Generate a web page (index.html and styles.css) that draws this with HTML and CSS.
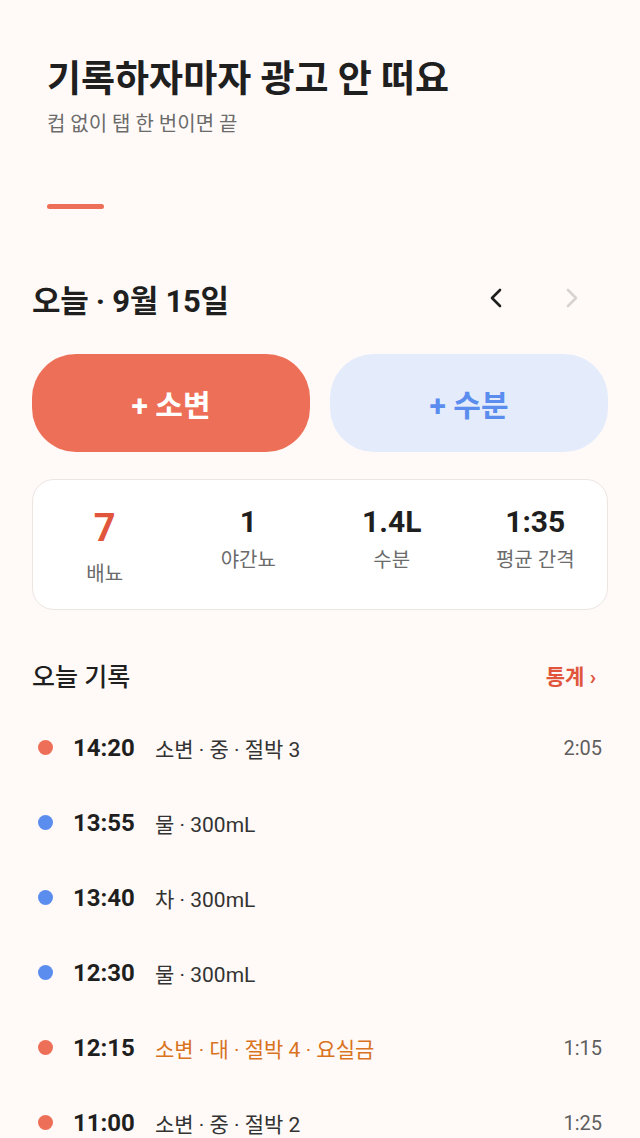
FILE: index.html
```html
<!DOCTYPE html>
<html lang="ko">
<head>
    <meta charset="UTF-8">
    <meta name="viewport" content="width=device-width, initial-scale=1.0">
    <title>오늘 기록</title>
    <link rel="stylesheet" href="styles.css">
</head>
<body>
    <div class="intro">
        <h1>기록하자마자 광고 안 떠요</h1>
        <p class="sub">컵 없이 탭 한 번이면 끝</p>
        <div class="accent"></div>
    </div>

    <div class="app">
        <div class="date-bar">
            <h2>오늘 · 9월 15일</h2>
            <div class="nav">
                <span class="chev">
                    <svg width="14" height="20" viewBox="0 0 14 20"><path d="M11 2 L3 10 L11 18" fill="none" stroke="#1f1f1f" stroke-width="2.6" stroke-linecap="round" stroke-linejoin="round"/></svg>
                </span>
                <span class="chev">
                    <svg width="14" height="20" viewBox="0 0 14 20"><path d="M3 2 L11 10 L3 18" fill="none" stroke="#d6d3d0" stroke-width="2.6" stroke-linecap="round" stroke-linejoin="round"/></svg>
                </span>
            </div>
        </div>

        <div class="actions">
            <button class="btn btn-urine">+ 소변</button>
            <button class="btn btn-water">+ 수분</button>
        </div>

        <div class="stats">
            <div class="stat">
                <div class="num big">7</div>
                <div class="label">배뇨</div>
            </div>
            <div class="stat">
                <div class="num">1</div>
                <div class="label">야간뇨</div>
            </div>
            <div class="stat">
                <div class="num">1.4L</div>
                <div class="label">수분</div>
            </div>
            <div class="stat">
                <div class="num">1:35</div>
                <div class="label">평균 간격</div>
            </div>
        </div>

        <div class="list-head">
            <h3>오늘 기록</h3>
            <a class="more">통계 ›</a>
        </div>

        <ul class="records">
            <li class="rec">
                <span class="dot urine"></span>
                <span class="time">14:20</span>
                <span class="desc">소변 · 중 · 절박 3</span>
                <span class="gap">2:05</span>
            </li>
            <li class="rec">
                <span class="dot water"></span>
                <span class="time">13:55</span>
                <span class="desc">물 · 300mL</span>
                <span class="gap"></span>
            </li>
            <li class="rec">
                <span class="dot water"></span>
                <span class="time">13:40</span>
                <span class="desc">차 · 300mL</span>
                <span class="gap"></span>
            </li>
            <li class="rec">
                <span class="dot water"></span>
                <span class="time">12:30</span>
                <span class="desc">물 · 300mL</span>
                <span class="gap"></span>
            </li>
            <li class="rec">
                <span class="dot urine"></span>
                <span class="time">12:15</span>
                <span class="desc warn">소변 · 대 · 절박 4 · 요실금</span>
                <span class="gap">1:15</span>
            </li>
            <li class="rec">
                <span class="dot urine"></span>
                <span class="time">11:00</span>
                <span class="desc">소변 · 중 · 절박 2</span>
                <span class="gap">1:25</span>
            </li>
        </ul>
    </div>
</body>
</html>
```

FILE: styles.css
```css
body {
    font-family: Roboto, "Noto Sans CJK KR", sans-serif;
    background-color: #fffaf7;
    color: #1f1f1f;
    margin: 0;
    padding: 0;
    width: 640px;
    height: 1138px;
    overflow: hidden;
}

.intro {
    padding: 55px 47px 0;
}

.intro h1 {
    font-size: 37px;
    font-weight: 700;
    margin: 0;
    line-height: 50px;
}

.sub {
    font-size: 20px;
    color: #6b6b6b;
    margin: 6px 0 0;
    line-height: 26px;
}

.accent {
    width: 57px;
    height: 5px;
    border-radius: 3px;
    background-color: #ee6f57;
    margin-top: 67px;
}

.app {
    padding: 0 32px;
}

.date-bar {
    display: flex;
    justify-content: space-between;
    align-items: center;
    height: 60px;
    margin-top: 59px;
}

.date-bar h2 {
    font-size: 31px;
    font-weight: 700;
    margin: 0;
    letter-spacing: -0.3px;
}

.nav {
    display: flex;
    gap: 62px;
    padding-right: 29px;
}

.chev {
    display: flex;
}

.actions {
    display: grid;
    grid-template-columns: 1fr 1fr;
    gap: 20px;
    margin-top: 26px;
}

.btn {
    height: 98px;
    border: none;
    border-radius: 44px;
    font-family: Roboto, "Noto Sans CJK KR", sans-serif;
    font-size: 30px;
    font-weight: 700;
    cursor: pointer;
}

.btn-urine {
    background-color: #ee6f57;
    color: #fff;
}

.btn-water {
    background-color: #e4ecfc;
    color: #5b8def;
}

.stats {
    display: grid;
    grid-template-columns: repeat(4, 1fr);
    background-color: #fff;
    border: 1.5px solid #ebe6e2;
    border-radius: 22px;
    margin-top: 27px;
    height: 131px;
    align-items: start;
    padding-top: 23px;
    box-sizing: border-box;
}

.stat {
    text-align: center;
}

.num {
    font-size: 30px;
    font-weight: 700;
    line-height: 38px;
}

.num.big {
    font-size: 38px;
    color: #e0553c;
    line-height: 50px;
}

.label {
    font-size: 20px;
    color: #6b6b6b;
    line-height: 24px;
    margin-top: 7px;
}

.big + .label {
    margin-top: 9px;
}

.list-head {
    display: flex;
    justify-content: space-between;
    align-items: center;
    height: 36px;
    margin-top: 47px;
    padding-right: 12px;
}

.list-head h3 {
    font-size: 25px;
    font-weight: 500;
    margin: 0;
}

.more {
    font-size: 21px;
    font-weight: 700;
    color: #e0553c;
}

.records {
    list-style: none;
    margin: 17px 0 0;
    padding: 0;
}

.rec {
    display: flex;
    align-items: center;
    height: 75px;
    padding: 0 6px;
}

.dot {
    width: 15px;
    height: 15px;
    border-radius: 50%;
    margin-right: 20px;
}

.dot.urine {
    background-color: #ee6f57;
}

.dot.water {
    background-color: #5b8def;
}

.time {
    font-size: 24px;
    font-weight: 700;
    width: 82px;
}

.desc {
    flex: 1;
    font-size: 21px;
    color: #333;
}

.desc.warn {
    color: #d9731f;
}

.gap {
    font-size: 20px;
    color: #5f5f5f;
}
```
